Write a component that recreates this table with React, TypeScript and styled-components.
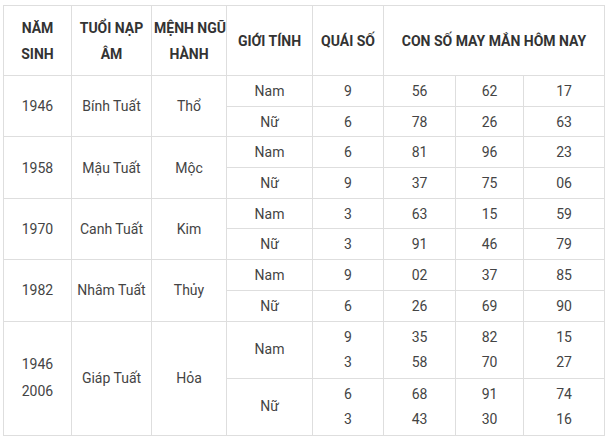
import React from "react";
import styled, { createGlobalStyle } from "styled-components";

const GlobalStyle = createGlobalStyle`
  html, body {
    margin: 0;
    padding: 0;
    background: #fff;
  }
  body {
    font-family: Roboto, "Noto Sans", Arial, sans-serif;
  }
`;

interface IGender {
  label: string;
  rows: { quai: string; nums: [string, string, string] }[];
}

interface IYear {
  years: string[];
  tuoi: string;
  menh: string;
  genders: IGender[];
}

const data: IYear[] = [
  {
    years: ["1946"],
    tuoi: "Bính Tuất",
    menh: "Thổ",
    genders: [
      { label: "Nam", rows: [{ quai: "9", nums: ["56", "62", "17"] }] },
      { label: "Nữ", rows: [{ quai: "6", nums: ["78", "26", "63"] }] },
    ],
  },
  {
    years: ["1958"],
    tuoi: "Mậu Tuất",
    menh: "Mộc",
    genders: [
      { label: "Nam", rows: [{ quai: "6", nums: ["81", "96", "23"] }] },
      { label: "Nữ", rows: [{ quai: "9", nums: ["37", "75", "06"] }] },
    ],
  },
  {
    years: ["1970"],
    tuoi: "Canh Tuất",
    menh: "Kim",
    genders: [
      { label: "Nam", rows: [{ quai: "3", nums: ["63", "15", "59"] }] },
      { label: "Nữ", rows: [{ quai: "3", nums: ["91", "46", "79"] }] },
    ],
  },
  {
    years: ["1982"],
    tuoi: "Nhâm Tuất",
    menh: "Thủy",
    genders: [
      { label: "Nam", rows: [{ quai: "9", nums: ["02", "37", "85"] }] },
      { label: "Nữ", rows: [{ quai: "6", nums: ["26", "69", "90"] }] },
    ],
  },
  {
    years: ["1946", "2006"],
    tuoi: "Giáp Tuất",
    menh: "Hỏa",
    genders: [
      {
        label: "Nam",
        rows: [
          { quai: "9", nums: ["35", "82", "15"] },
          { quai: "3", nums: ["58", "70", "27"] },
        ],
      },
      {
        label: "Nữ",
        rows: [
          { quai: "6", nums: ["68", "91", "74"] },
          { quai: "3", nums: ["43", "30", "16"] },
        ],
      },
    ],
  },
];

const colWidths = [68, 80, 75, 86, 71, 72, 68, 81];

const lines = (items: string[]) =>
  items.map((t, i) => (
    <React.Fragment key={i}>
      {i > 0 && <br />}
      {t}
    </React.Fragment>
  ));

const App: React.FC = () => {
  return (
    <>
      <GlobalStyle />
      <Wrapper>
        <Table>
          <colgroup>
            {colWidths.map((w, i) => (
              <col key={i} style={{ width: w }} />
            ))}
          </colgroup>
          <thead>
            <tr>
              <HeadCell>
                NĂM
                <br />
                SINH
              </HeadCell>
              <HeadCell>
                TUỔI NẠP
                <br />
                ÂM
              </HeadCell>
              <HeadCell>
                MỆNH NGŨ
                <br />
                HÀNH
              </HeadCell>
              <HeadCell>GIỚI TÍNH</HeadCell>
              <HeadCell>QUÁI SỐ</HeadCell>
              <HeadCell colSpan={3}>CON SỐ MAY MẮN HÔM NAY</HeadCell>
            </tr>
          </thead>
          <tbody>
            {data.map((y, yi) => {
              const multi = y.genders.some((g) => g.rows.length > 1);
              return y.genders.map((g, gi) => (
                <tr key={`${yi}-${gi}`}>
                  {gi === 0 && (
                    <>
                      <Cell rowSpan={y.genders.length} $tall={multi}>
                        {lines(y.years)}
                      </Cell>
                      <Cell rowSpan={y.genders.length}>{y.tuoi}</Cell>
                      <Cell rowSpan={y.genders.length}>{y.menh}</Cell>
                    </>
                  )}
                  <Cell $multi={multi}>{g.label}</Cell>
                  <Cell $multi={multi}>{lines(g.rows.map((r) => r.quai))}</Cell>
                  {[0, 1, 2].map((n) => (
                    <Cell key={n} $multi={multi}>
                      {lines(g.rows.map((r) => r.nums[n]))}
                    </Cell>
                  ))}
                </tr>
              ));
            })}
          </tbody>
        </Table>
      </Wrapper>
    </>
  );
};

const Wrapper = styled.div`
  padding: 5px 0 0 3px;
  width: 609px;
  height: 439px;
  box-sizing: border-box;
`;

const Table = styled.table`
  border-collapse: collapse;
  table-layout: fixed;
  width: 601px;
  font-family: Roboto, "Noto Sans", Arial, sans-serif;
  font-size: 14px;
`;

const HeadCell = styled.th`
  border: 1px solid #dedede;
  padding: 9px 2px 8px;
  line-height: 26px;
  height: 52px;
  font-weight: 700;
  color: #333;
  text-align: center;
  vertical-align: middle;
  white-space: nowrap;
  box-sizing: content-box;
`;

const Cell = styled.td<{ $multi?: boolean; $tall?: boolean }>`
  border: 1px solid #dedede;
  padding: ${(p) => (p.$multi ? "3px 4px" : "4px 4px 3.7px")};
  line-height: ${(p) => (p.$tall ? "27px" : p.$multi ? "25px" : "22px")};
  height: ${(p) => (p.$multi ? "49px" : "22px")};
  color: #444;
  text-align: center;
  vertical-align: middle;
  white-space: nowrap;
  box-sizing: content-box;
`;

export default App;
